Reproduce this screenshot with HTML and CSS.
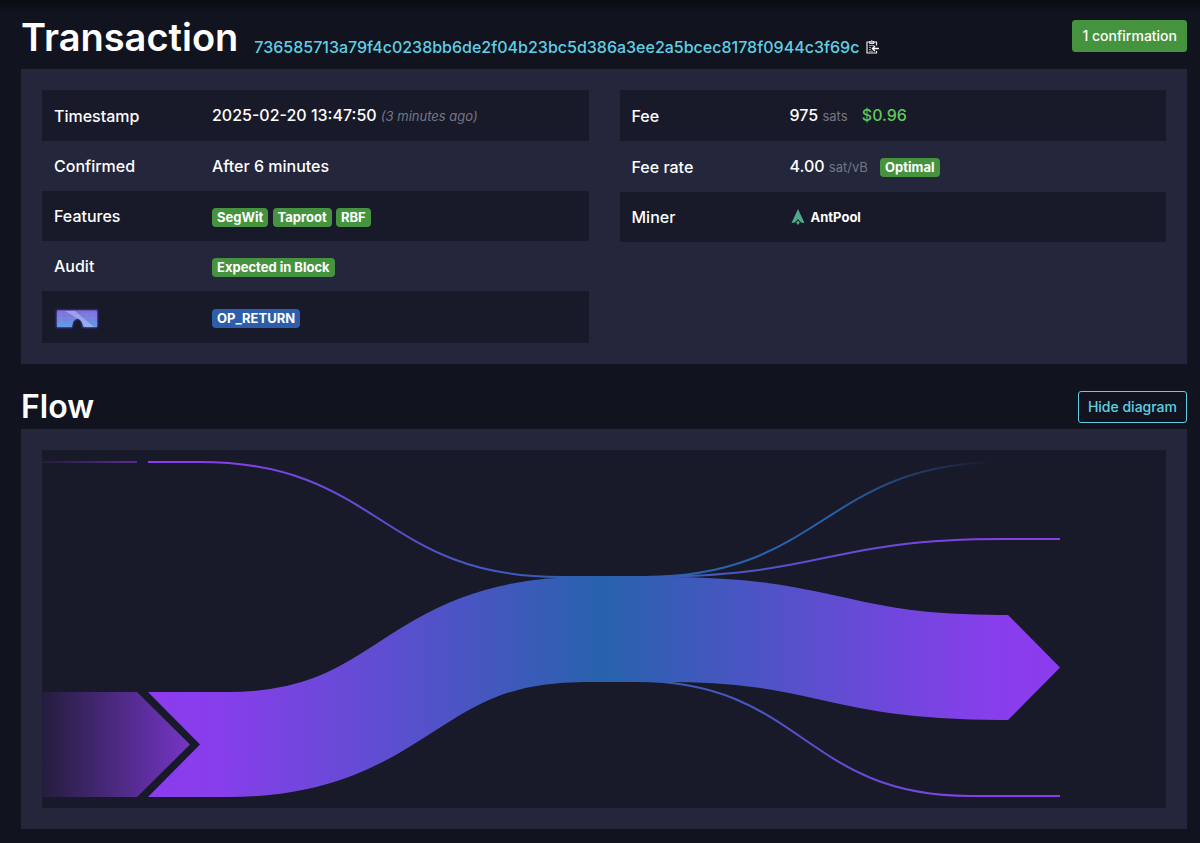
FILE: index.html
```html
<!DOCTYPE html>
<html lang="en">
    <head>
        <meta charset="utf-8">
        <title>Transaction</title>
        <link rel="stylesheet" href="styles.css">
    </head>
    <body>
        <main class="page">
            <header class="title-row">
                <h1>Transaction</h1>
                <div class="txid">
                    <a href="#">736585713a79f4c0238bb6de2f04b23bc5d386a3ee2a5bcec8178f0944c3f69c</a>
                    <button class="copy" type="button" aria-label="Copy">
                        <svg width="13" height="14" viewBox="0 0 13 14" fill="none">
                            <path d="M3.5 2H1v11h9.500v-2M8 2h2.500v3.500" stroke="#e8e8ee" stroke-width="1.200"/>
                            <path d="M3.500 1.500h1.200a1.100 1.100 0 0 1 2.100 0H8v2H3.500z" fill="#9a9ba8" stroke="#fff" stroke-width=".8"/>
                            <path d="M3 5.500h5M3 7.500h2M3 9.500h2M3 11.300h4" stroke="#9a9ba8"/>
                            <path d="M13 8.500H7M9 6 6.500 8.500 9 11" stroke="#fff" stroke-width="1.400"/>
                        </svg>
                    </button>
                </div>
                <button class="btn btn-success" type="button">1 confirmation</button>
            </header>

            <section class="box details">
                <table>
                    <tr>
                        <th>Timestamp</th>
                        <td>2025-02-20 13:47:50 <i class="ago">(3 minutes ago)</i></td>
                    </tr>
                    <tr>
                        <th>Confirmed</th>
                        <td>After 6 minutes</td>
                    </tr>
                    <tr>
                        <th>Features</th>
                        <td><span class="badge">SegWit</span> <span class="badge">Taproot</span> <span class="badge">RBF</span></td>
                    </tr>
                    <tr>
                        <th>Audit</th>
                        <td><span class="badge">Expected in Block</span></td>
                    </tr>
                    <tr>
                        <th>
                            <svg class="goggles" width="46" height="22" viewBox="0 0 46 22" role="img" aria-label="Goggles">
                                <defs>
                                    <linearGradient id="lens" x1="0" y1="0" x2="0" y2="1">
                                        <stop offset="0" stop-color="#8068d8"/>
                                        <stop offset="1" stop-color="#5fa0e6"/>
                                    </linearGradient>
                                </defs>
                                <path d="M4 1.500h38q2 0 2 2V18q0 2-2 2H30q-2 0-2-2l-1-4q-3-5-7 0l-1 4q0 2-2 2H4q-2 0-2-2V3.500q0-2 2-2z" fill="url(#lens)" stroke="#2c2466" stroke-width="1.500"/>
                                <path d="M11 3h10l19 16h-9L26 12z" fill="#b4c0f4" opacity=".6"/>
                                <path d="M3 6h40M3 10h40M7 3v13M33 3v8M38 3v11" stroke="#a890f0" opacity=".3"/>
                            </svg>
                        </th>
                        <td><span class="badge badge-blue">OP_RETURN</span></td>
                    </tr>
                </table>
                <table>
                    <tr>
                        <th>Fee</th>
                        <td>975 <span class="unit">sats</span> <span class="fiat">$0.96</span></td>
                    </tr>
                    <tr>
                        <th>Fee rate</th>
                        <td>4.00 <span class="unit">sat/vB</span> <span class="badge rating">Optimal</span></td>
                    </tr>
                    <tr>
                        <th>Miner</th>
                        <td>
                            <a class="miner" href="#">
                                <svg width="16" height="16" viewBox="0 0 16 16">
                                    <path d="M8 0 14.500 14 11 13.500 8 10 5 13.500 1.500 14z" fill="#4fa98a"/>
                                    <path d="m8 11.500 1.800 2L8 16l-1.800-2.500z" fill="#4fa98a"/>
                                </svg>
                                AntPool
                            </a>
                        </td>
                    </tr>
                </table>
            </section>

            <div class="title-row flow-title">
                <h2>Flow</h2>
                <button class="btn btn-outline" type="button">Hide diagram</button>
            </div>

            <section class="box">
                <svg class="flow" viewBox="0 0 1124 358" fill="none">
                    <defs>
                        <linearGradient id="in" gradientUnits="userSpaceOnUse" x1="106" y1="0" x2="562" y2="0">
                            <stop offset="0" stop-color="#8c3cee"/>
                            <stop offset=".15" stop-color="#883eec"/>
                            <stop offset="1" stop-color="#2762ac"/>
                        </linearGradient>
                        <linearGradient id="out" gradientUnits="userSpaceOnUse" x1="562" y1="0" x2="1018" y2="0">
                            <stop offset="0" stop-color="#2762ac"/>
                            <stop offset=".85" stop-color="#883eec"/>
                            <stop offset="1" stop-color="#8c3cee"/>
                        </linearGradient>
                        <linearGradient id="fee" gradientUnits="userSpaceOnUse" x1="562" y1="0" x2="1018" y2="0">
                            <stop offset="0" stop-color="#2762ac"/>
                            <stop offset=".5" stop-color="#2762ac"/>
                            <stop offset=".85" stop-color="#2762ac" stop-opacity="0"/>
                        </linearGradient>
                        <linearGradient id="connector" gradientUnits="userSpaceOnUse" x1="0" y1="0" x2="148" y2="0">
                            <stop offset="0" stop-color="#8c3cee" stop-opacity=".1"/>
                            <stop offset="1" stop-color="#8c3cee" stop-opacity=".8"/>
                        </linearGradient>
                    </defs>
                    <path d="M0 11H95V13H0z" fill="url(#connector)"/>
                    <path d="M0 242H95L148 294.500 95 347H0z" fill="url(#connector)"/>
                    <path d="M106 12H158C338 12 338 127 518 127H562" stroke="url(#in)" stroke-width="2"/>
                    <path d="M562 127H602C782 127 782 12 962 12H1018" stroke="url(#fee)" stroke-width="2"/>
                    <path d="M562 127H602C782 127 782 89 962 89H1018" stroke="url(#out)" stroke-width="2"/>
                    <path d="M562 231H594C761 231 761 346 928 346H1018" stroke="url(#out)" stroke-width="2"/>
                    <path d="M158 294.500H186C364 294.500 364 179.500 542 179.500H562" stroke="url(#in)" stroke-width="105"/>
                    <path d="M106 242H159V347H106L158 294.500z" fill="url(#in)"/>
                    <path d="M562 179.500H622C790 179.500 790 217.500 958 217.500H966" stroke="url(#out)" stroke-width="105"/>
                    <path d="M966 165 1018 217.500 966 270z" fill="url(#out)"/>
                </svg>
            </section>
        </main>
    </body>
</html>
```
FILE: styles.css
```css
* {
    box-sizing: border-box;
}
body {
    margin: 0;
    min-height: 100vh;
    background: linear-gradient(#0b0d13, #11131f 14px);
    color: #fff;
    font-family: Inter, sans-serif;
    font-size: 16px;
    font-weight: 500;
    line-height: 26px;
}
.page {
    padding: 13px 13px 14px 21px;
}
h1, h2 {
    margin: 0;
    font-weight: 600;
}
h1 {
    font-size: 38px;
    line-height: 48px;
}
h2 {
    font-size: 32px;
    line-height: 40px;
}
a {
    color: #5fd0e4;
    text-decoration: none;
}
.title-row {
    display: flex;
    align-items: flex-start;
    gap: 16px;
    min-height: 56px;
}
.txid {
    display: flex;
    align-items: center;
    align-self: flex-end;
    gap: 7px;
    margin: 0 auto 9px 0;
}
.copy {
    display: flex;
    padding: 0;
    border: 0;
    background: none;
}
.btn {
    height: 32px;
    padding: 0 9px;
    border: 1px solid;
    border-radius: 3px;
    font: 500 14px/22px Inter, sans-serif;
}
.btn-success {
    margin-top: 7px;
    border-color: #46933f;
    background: #46933f;
    color: #fff;
}
.btn-outline {
    border-color: #5fd0e4;
    background: none;
    color: #5fd0e4;
}
.flow-title {
    align-items: center;
    justify-content: space-between;
    min-height: 44px;
    margin-top: 21px;
}
.box {
    padding: 21px;
    background: #24263b;
}
.details {
    display: grid;
    grid-template-columns: 1fr 1fr;
    gap: 31px;
    align-items: start;
}
table {
    width: 100%;
    border-collapse: collapse;
    table-layout: fixed;
}
tr:nth-child(odd) {
    background: #181a29;
}
th, td {
    padding: 12px;
    font-weight: 500;
    text-align: left;
    white-space: nowrap;
}
th {
    width: 158px;
}
.goggles {
    display: block;
    margin: 5px 0 1px;
}
.ago, .unit {
    color: #747684;
    font-size: 13px;
    font-weight: 400;
}
.fiat {
    margin-left: 10px;
    color: #5fc95a;
}
.badge {
    display: inline-block;
    padding: 0 5px;
    border-radius: 4px;
    background: #46933f;
    font-size: 13px;
    font-weight: 700;
    line-height: 19px;
}
.badge-blue {
    background: #2c5eac;
}
.rating {
    margin-left: 8px;
}
.miner {
    display: flex;
    align-items: center;
    gap: 5px;
    color: #fff;
    font-size: 13px;
    font-weight: 700;
}
.flow {
    display: block;
    width: 100%;
    background: #181a29;
}
```
